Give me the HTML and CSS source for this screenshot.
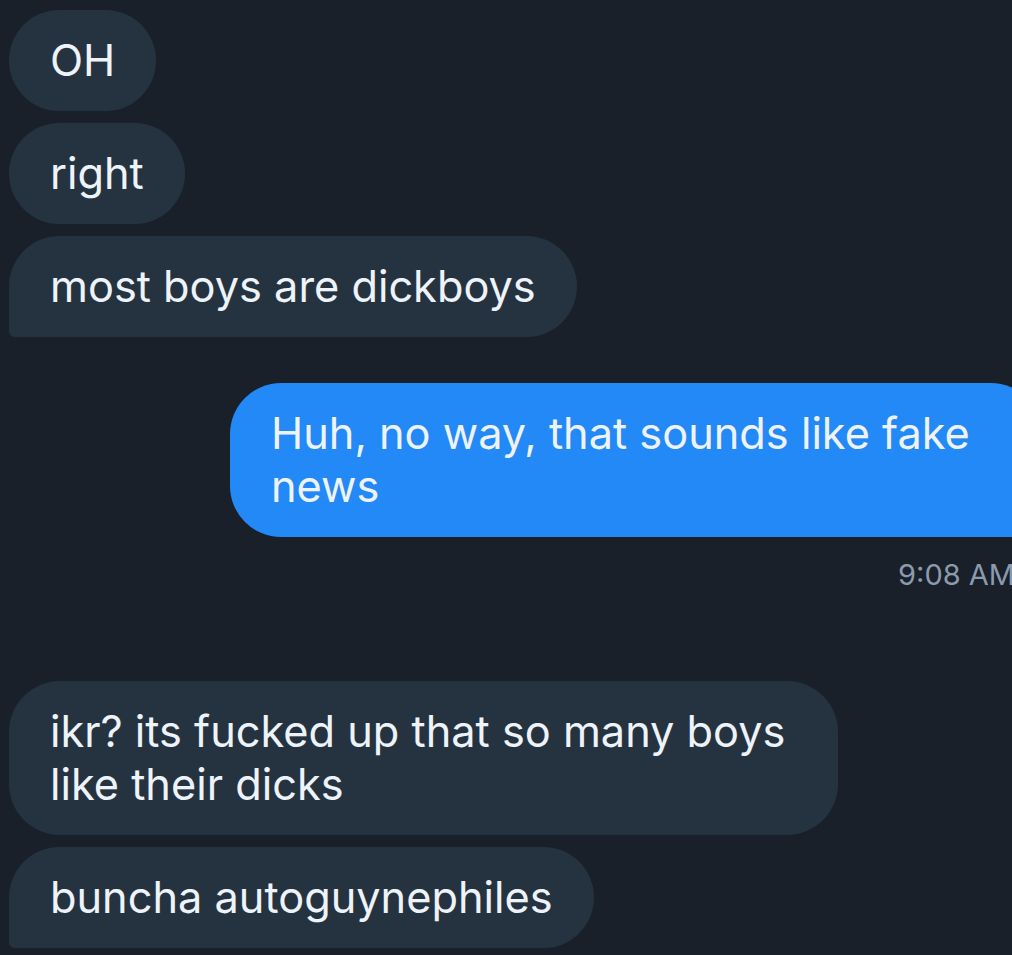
FILE: index.html
```html
<!DOCTYPE html>
<html>
<head>
<meta charset="utf-8">
<link rel="stylesheet" href="styles.css">
</head>
<body>
<div class="chat">
  <div class="bubble in">OH</div>
  <div class="bubble in">right</div>
  <div class="bubble in tail">most boys are dickboys</div>
  <div class="bubble out">Huh, no way, that sounds like fake news</div>
  <div class="time">9:08 AM</div>
  <div class="bubble in wide">ikr? its fucked up that so many boys like their dicks</div>
  <div class="bubble in tail">buncha autoguynephiles</div>
</div>
</body>
</html>
```
FILE: styles.css
```css
html, body {
  margin: 0;
  padding: 0;
  background: #19202a;
}
body {
  width: 1012px;
  height: 955px;
  overflow: hidden;
  font-family: "Inter", "Roboto", sans-serif;
}
.chat {
  display: flex;
  flex-direction: column;
  align-items: flex-start;
  gap: 12px;
  padding: 10px 0 0 9px;
}
.bubble {
  font-size: 43.3px;
  line-height: 53px;
  color: #eef3f9;
  padding: 24px 41px;
  border-radius: 51px;
  box-sizing: border-box;
}
.in {
  background: #253341;
}
.tail {
  border-bottom-left-radius: 6px;
}
.wide {
  width: 829px;
  padding-right: 28px;
}
.out {
  background: #2389f6;
  align-self: flex-end;
  width: 812px;
  margin-top: 34px;
  margin-right: -30px;
  border-bottom-right-radius: 6px;
}
.time {
  align-self: flex-end;
  margin-right: -3px;
  margin-top: 8px;
  margin-bottom: 76px;
  font-size: 29px;
  line-height: 36px;
  color: #8b9bad;
}
```
